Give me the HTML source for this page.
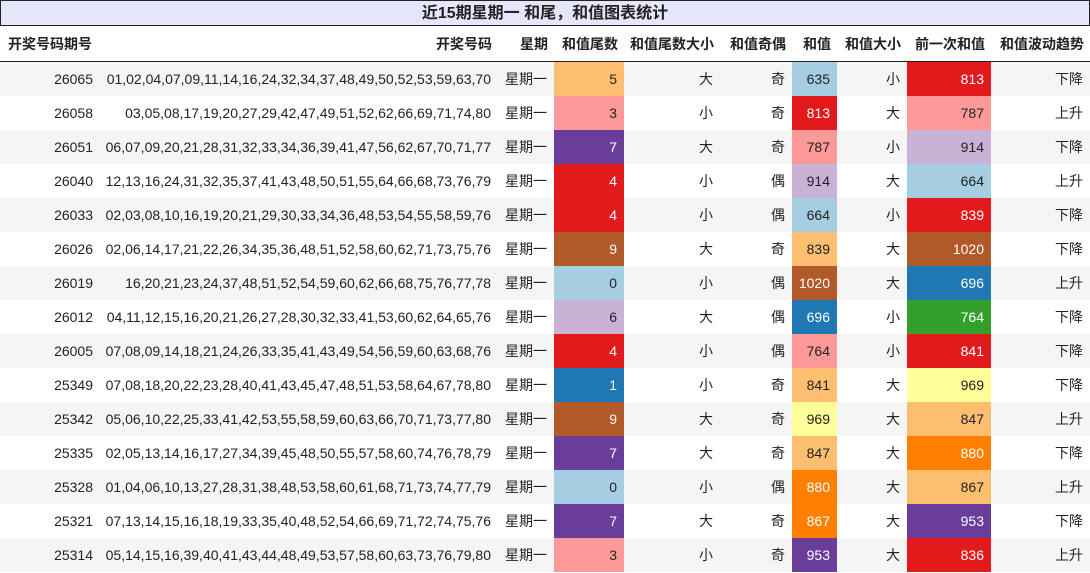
<!DOCTYPE html>
<html><head><meta charset="utf-8"><style>
*{margin:0;padding:0;box-sizing:border-box}
body{width:1090px;height:573px;background:#fff;font-family:"Liberation Sans","Noto Sans CJK SC",sans-serif;color:#222;overflow:hidden}
.title{position:absolute;left:0;top:0;width:1090px;height:26px;background:#e6e6fa;border:1px solid #222;text-align:center;font-weight:bold;font-size:16px;line-height:25px}
.hdr{position:absolute;top:26px;left:0;width:1090px;height:36px;border-bottom:1.5px solid #222;display:flex;font-weight:bold;font-size:14px;line-height:37px}
.row{position:absolute;left:0;width:1090px;height:34px;display:flex;font-size:14px;line-height:35px}
.row.g{background:#f5f5f5}
.c{text-align:right;padding-right:7px;white-space:nowrap}
.w1{width:100px}.w2{width:398px}.w3{width:56px}.w4{width:70px}.w5{width:96px}.w6{width:72px}.w7{width:45px}.w8{width:70px}.w9{width:84px}.w10{width:99px}
.hdr .c{padding-right:6px}
.hdr .w1{padding-right:8px}
.wt{color:#fff}
</style></head><body>
<div class="title">近15期星期一 和尾，和值图表统计</div>
<div class="hdr"><div class="c w1">开奖号码期号</div><div class="c w2">开奖号码</div><div class="c w3">星期</div><div class="c w4">和值尾数</div><div class="c w5">和值尾数大小</div><div class="c w6">和值奇偶</div><div class="c w7">和值</div><div class="c w8">和值大小</div><div class="c w9">前一次和值</div><div class="c w10">和值波动趋势</div></div>
<div id="rows"></div>
<script>
var d=[
["26065","01,02,04,07,09,11,14,16,24,32,34,37,48,49,50,52,53,59,63,70","5","#fdbf6f","大","奇","635","#a6cee3","小","813","#e31a1c","下降"],
["26058","03,05,08,17,19,20,27,29,42,47,49,51,52,62,66,69,71,74,80","3","#fb9a99","小","奇","813","#e31a1c","大","787","#fb9a99","上升"],
["26051","06,07,09,20,21,28,31,32,33,34,36,39,41,47,56,62,67,70,71,77","7","#6a3d9a","大","奇","787","#fb9a99","小","914","#cab2d6","下降"],
["26040","12,13,16,24,31,32,35,37,41,43,48,50,51,55,64,66,68,73,76,79","4","#e31a1c","小","偶","914","#cab2d6","大","664","#a6cee3","上升"],
["26033","02,03,08,10,16,19,20,21,29,30,33,34,36,48,53,54,55,58,59,76","4","#e31a1c","小","偶","664","#a6cee3","小","839","#e31a1c","下降"],
["26026","02,06,14,17,21,22,26,34,35,36,48,51,52,58,60,62,71,73,75,76","9","#b15928","大","奇","839","#fdbf6f","大","1020","#b15928","下降"],
["26019","16,20,21,23,24,37,48,51,52,54,59,60,62,66,68,75,76,77,78","0","#a6cee3","小","偶","1020","#b15928","大","696","#1f78b4","上升"],
["26012","04,11,12,15,16,20,21,26,27,28,30,32,33,41,53,60,62,64,65,76","6","#cab2d6","大","偶","696","#1f78b4","小","764","#33a02c","下降"],
["26005","07,08,09,14,18,21,24,26,33,35,41,43,49,54,56,59,60,63,68,76","4","#e31a1c","小","偶","764","#fb9a99","小","841","#e31a1c","下降"],
["25349","07,08,18,20,22,23,28,40,41,43,45,47,48,51,53,58,64,67,78,80","1","#1f78b4","小","奇","841","#fdbf6f","大","969","#ffff99","下降"],
["25342","05,06,10,22,25,33,41,42,53,55,58,59,60,63,66,70,71,73,77,80","9","#b15928","大","奇","969","#ffff99","大","847","#fdbf6f","上升"],
["25335","02,05,13,14,16,17,27,34,39,45,48,50,55,57,58,60,74,76,78,79","7","#6a3d9a","大","奇","847","#fdbf6f","大","880","#ff7f00","下降"],
["25328","01,04,06,10,13,27,28,31,38,48,53,58,60,61,68,71,73,74,77,79","0","#a6cee3","小","偶","880","#ff7f00","大","867","#fdbf6f","上升"],
["25321","07,13,14,15,16,18,19,33,35,40,48,52,54,66,69,71,72,74,75,76","7","#6a3d9a","大","奇","867","#ff7f00","大","953","#6a3d9a","下降"],
["25314","05,14,15,16,39,40,41,43,44,48,49,53,57,58,60,63,73,76,79,80","3","#fb9a99","小","奇","953","#6a3d9a","大","836","#e31a1c","上升"]];
var dark={"#e31a1c":1,"#6a3d9a":1,"#b15928":1,"#1f78b4":1,"#33a02c":1,"#ff7f00":1};
var h="";
d.forEach(function(r,i){
function cc(v,col,w){return '<div class="c '+w+(dark[col]?' wt':'')+'" style="background:'+col+'">'+v+'</div>';}
h+='<div class="row'+(i%2==0?' g':'')+'" style="top:'+(62+i*34)+'px"><div class="c w1">'+r[0]+'</div><div class="c w2">'+r[1]+'</div><div class="c w3">星期一</div>'+cc(r[2],r[3],'w4')+'<div class="c w5">'+r[4]+'</div><div class="c w6">'+r[5]+'</div>'+cc(r[6],r[7],'w7')+'<div class="c w8">'+r[8]+'</div>'+cc(r[9],r[10],'w9')+'<div class="c w10">'+r[11]+'</div></div>';
});
document.getElementById("rows").innerHTML=h;
</script>
</body></html>
